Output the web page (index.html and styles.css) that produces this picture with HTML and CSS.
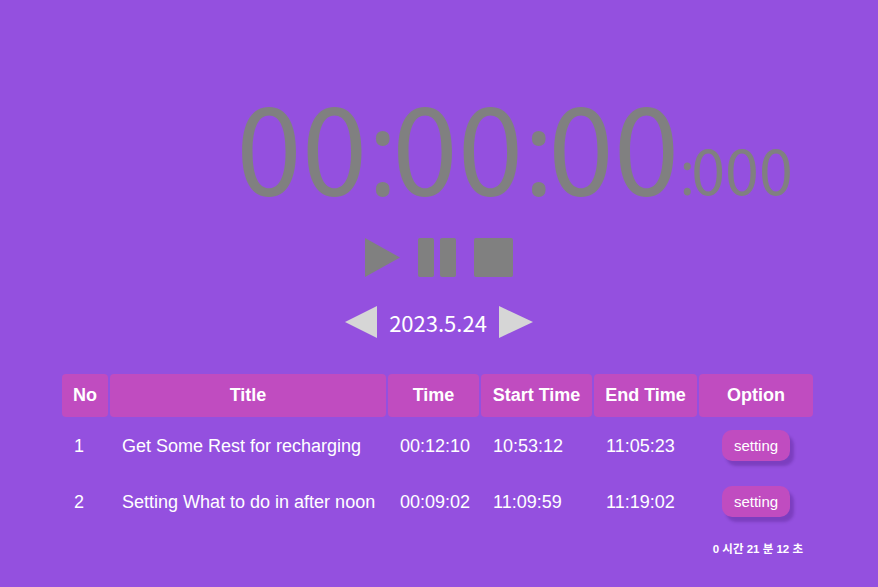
FILE: index.html
```html
<!DOCTYPE html>
<html lang="ko">
<head>
<meta charset="utf-8">
<title>Timer</title>
<link rel="stylesheet" href="styles.css">
</head>
<body>
<div class="app">
  <div class="timer"><span class="timer-main">00<span class="sep">:</span>00<span class="sep">:</span>00</span><span class="timer-ms"><span class="sep-ms">:</span>000</span></div>

  <div class="controls">
    <svg class="ctl-play" width="35" height="39" viewBox="0 0 35 39"><polygon points="0,0 35,19.5 0,39"/></svg>
    <div class="ctl-pause"><span class="bar"></span><span class="bar"></span></div>
    <div class="ctl-stop"></div>
  </div>

  <div class="date-nav">
    <svg class="arrow" width="32" height="32" viewBox="0 0 32 32"><polygon points="32,0 0,16 32,32"/></svg>
    <span class="date-text">2023.5.24</span>
    <svg class="arrow" width="34" height="32" viewBox="0 0 34 32"><polygon points="0,0 34,16 0,32"/></svg>
  </div>

  <table class="records">
    <colgroup>
      <col class="col-no"><col class="col-title"><col class="col-time"><col class="col-start"><col class="col-end"><col class="col-opt">
    </colgroup>
    <thead>
      <tr><th>No</th><th>Title</th><th>Time</th><th>Start Time</th><th>End Time</th><th>Option</th></tr>
    </thead>
    <tbody>
      <tr>
        <td>1</td><td>Get Some Rest for recharging</td><td>00:12:10</td><td>10:53:12</td><td>11:05:23</td>
        <td class="opt"><button class="btn-setting">setting</button></td>
      </tr>
      <tr>
        <td>2</td><td>Setting What to do in after noon</td><td>00:09:02</td><td>11:09:59</td><td>11:19:02</td>
        <td class="opt"><button class="btn-setting">setting</button></td>
      </tr>
    </tbody>
  </table>

  <div class="total">0 시간 21 분 12 초</div>
</div>
</body>
</html>
```

FILE: styles.css
```css
html, body {
  margin: 0;
  padding: 0;
  height: 100%;
}

body {
  background: #9450df;
  font-family: "Liberation Sans", "Noto Sans CJK KR", sans-serif;
  color: #ffffff;
}

.app {
  padding-top: 84px;
  display: flex;
  flex-direction: column;
  align-items: center;
}

.timer {
  display: flex;
  align-items: baseline;
  padding-left: 151px;
  font-family: "Noto Sans CJK KR", sans-serif;
  color: #808080;
  line-height: 119px;
  height: 125px;
}

.timer-main {
  font-size: 118px;
}

.sep {
  font-family: "Open Sans", sans-serif;
  letter-spacing: -6px;
}

.timer-ms {
  font-size: 61px;
  line-height: 1;
}

.sep-ms {
  font-family: "Open Sans", sans-serif;
  letter-spacing: -4px;
}

.controls {
  margin-top: 29px;
  display: flex;
  align-items: center;
  gap: 18px;
  height: 39px;
}

.ctl-play {
  display: block;
  fill: #808080;
}

.ctl-pause {
  display: flex;
  gap: 6px;
}

.bar {
  display: block;
  width: 16px;
  height: 39px;
  background: #808080;
  border-radius: 2px;
}

.ctl-stop {
  width: 39px;
  height: 39px;
  background: #808080;
  border-radius: 2px;
}

.date-nav {
  margin-top: 29px;
  display: flex;
  align-items: center;
  gap: 12px;
  height: 32px;
}

.arrow {
  display: block;
  fill: #d6d6d6;
}

.date-text {
  font-family: "Noto Sans CJK KR", sans-serif;
  font-size: 22px;
  line-height: 32px;
  color: #ffffff;
}

.records {
  margin-top: 36px;
  margin-right: 3px;
  border-collapse: separate;
  border-spacing: 2px 0;
  table-layout: fixed;
  width: 755px;
  font-size: 18px;
}

.col-no { width: 46px; }
.col-title { width: 276px; }
.col-time { width: 91px; }
.col-start { width: 111px; }
.col-end { width: 103px; }
.col-opt { width: 114px; }

.records th {
  height: 43px;
  padding: 0;
  background: #c04cc0;
  border-radius: 4px;
  font-weight: bold;
  text-align: center;
  vertical-align: middle;
}

.records td {
  height: 56px;
  padding: 2px 0 0 12px;
  box-sizing: border-box;
  text-align: left;
  vertical-align: middle;
  white-space: nowrap;
}

.records td.opt {
  padding: 0;
  text-align: center;
}

.btn-setting {
  width: 68px;
  height: 31px;
  padding: 0;
  border: none;
  border-radius: 10px;
  background: #c04cc0;
  color: #ffffff;
  font-family: "Liberation Sans", sans-serif;
  font-size: 15px;
  box-shadow: 4px 5px 3px rgba(40, 0, 80, 0.22);
  cursor: pointer;
}

.total {
  width: 755px;
  margin-right: 3px;
  margin-top: 12px;
  padding-right: 12px;
  box-sizing: border-box;
  text-align: right;
  font-size: 11.5px;
  font-weight: bold;
  line-height: 16px;
}
```
